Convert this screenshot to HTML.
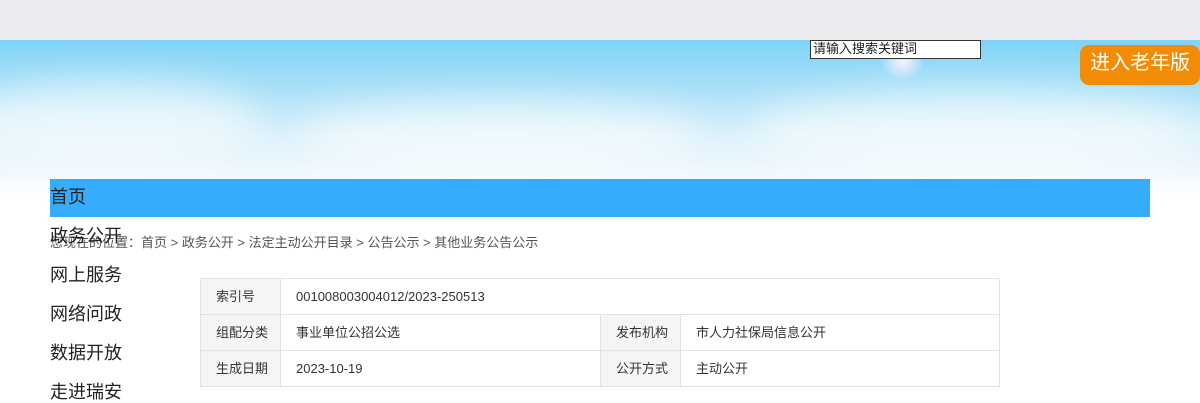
<!DOCTYPE html>
<html><head><meta charset="utf-8"><style>
body{margin:0;width:1200px;height:400px;overflow:hidden;background:#fff;font-family:"Liberation Sans","Noto Sans CJK SC",sans-serif;position:relative}
.top{position:absolute;left:0;top:0;width:1200px;height:40px;background:#ebecf0}
.sky{position:absolute;left:0;top:40px;width:1200px;height:160px;background:linear-gradient(180deg,#7fd3f7 0%,#a9e0f7 30%,#dcf1fb 60%,#fff 100%)}
.cloud{position:absolute;border-radius:50%;background:rgba(255,255,255,.55);filter:blur(18px)}
.sun{position:absolute;left:880px;top:45px;width:45px;height:35px;border-radius:50%;background:radial-gradient(#fdf0ff,rgba(255,230,255,0) 70%)}
.search{position:absolute;left:810px;top:40px;font-size:13px;line-height:16px;color:#222;padding-left:2px;box-sizing:border-box;width:171px;height:19px;border:1px solid #333;background:#fff}
.old{position:absolute;left:1080px;top:45px;width:120px;height:40px;background:#f28c06;border-radius:9px;color:#fff;font-size:20px;line-height:36px;text-align:center}
.nav{position:absolute;left:50px;top:179px;width:1100px;height:38px;background:#36acfd}
.m{position:absolute;left:50px;font-size:18px;line-height:22px;color:#222}
.bc{position:absolute;left:50px;top:235px;font-size:13px;line-height:16px;color:#555}
table{position:absolute;left:200px;top:278px;width:799px;border-collapse:collapse;font-size:13px;color:#333;table-layout:fixed}
td{border:1px solid #e2e2e2;height:35px;padding:0 15px;white-space:nowrap;line-height:16px}
td.h{background:#f5f5f5}
</style></head><body>
<div class="top"></div>
<div class="sky">
<div class="cloud" style="left:-40px;top:40px;width:300px;height:80px"></div>
<div class="cloud" style="left:300px;top:60px;width:400px;height:70px"></div>
<div class="cloud" style="left:750px;top:50px;width:450px;height:80px"></div>
</div>
<div class="sun"></div>
<div class="search">请输入搜索关键词</div>
<div class="old">进入老年版</div>
<div class="nav"></div>
<div class="m" style="top:186px">首页</div>
<div class="bc">您现在的位置：首页 &gt; 政务公开 &gt; 法定主动公开目录 &gt; 公告公示 &gt; 其他业务公告公示</div>
<div class="m" style="top:225px">政务公开</div>
<div class="m" style="top:264px">网上服务</div>
<div class="m" style="top:303px">网络问政</div>
<div class="m" style="top:342px">数据开放</div>
<div class="m" style="top:381px">走进瑞安</div>
<table>
<colgroup><col style="width:80px"><col style="width:320px"><col style="width:80px"><col style="width:319px"></colgroup>
<tr><td class="h">索引号</td><td colspan="3">001008003004012/2023-250513</td></tr>
<tr><td class="h">组配分类</td><td>事业单位公招公选</td><td class="h">发布机构</td><td>市人力社保局信息公开</td></tr>
<tr><td class="h">生成日期</td><td>2023-10-19</td><td class="h">公开方式</td><td>主动公开</td></tr>
</table>
</body></html>
